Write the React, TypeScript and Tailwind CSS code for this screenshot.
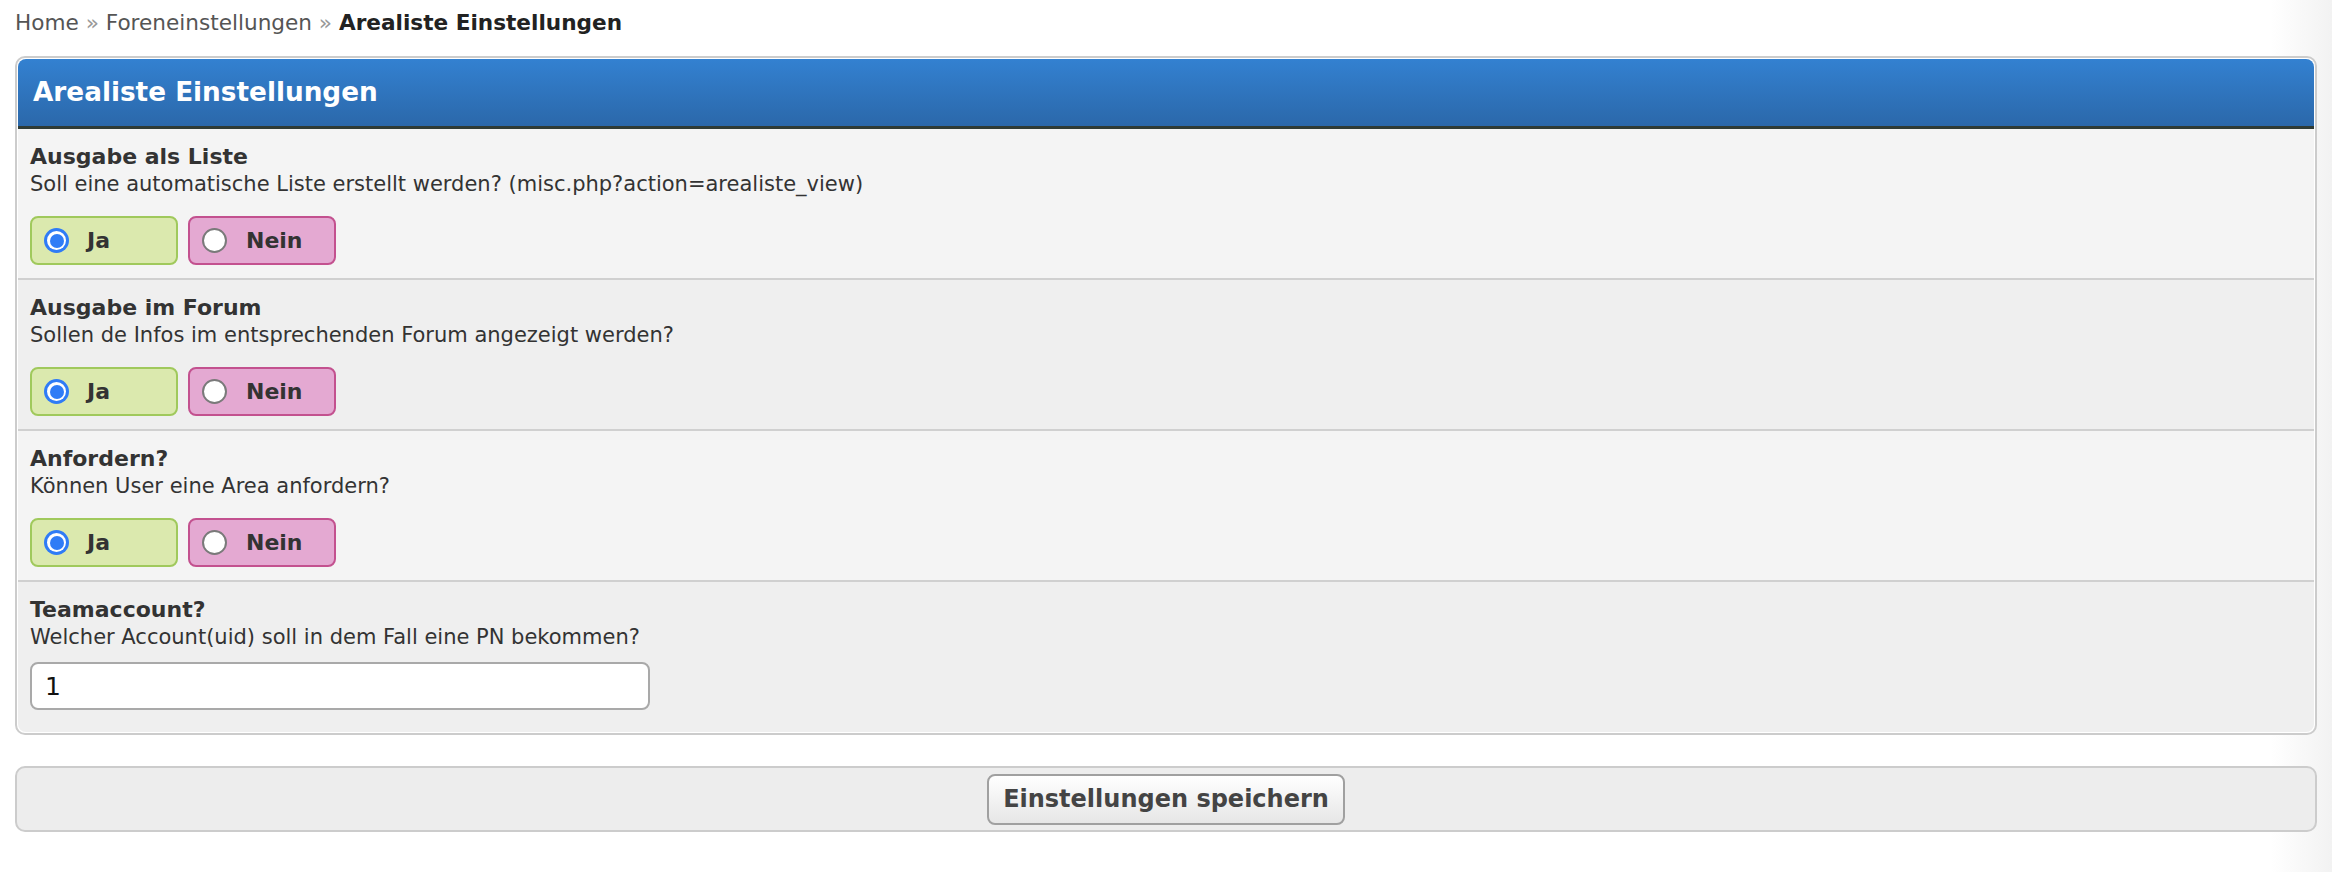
import React from 'react';

type Setting = {
  title: string;
  desc: string;
  kind: 'yesno' | 'text';
  value: string;
};

const settings: Setting[] = [
  {
    title: 'Ausgabe als Liste',
    desc: 'Soll eine automatische Liste erstellt werden? (misc.php?action=arealiste_view)',
    kind: 'yesno',
    value: 'ja',
  },
  {
    title: 'Ausgabe im Forum',
    desc: 'Sollen de Infos im entsprechenden Forum angezeigt werden?',
    kind: 'yesno',
    value: 'ja',
  },
  {
    title: 'Anfordern?',
    desc: 'Können User eine Area anfordern?',
    kind: 'yesno',
    value: 'ja',
  },
  {
    title: 'Teamaccount?',
    desc: 'Welcher Account(uid) soll in dem Fall eine PN bekommen?',
    kind: 'text',
    value: '1',
  },
];

// Radio-Kreis wie im macOS-Look
function RadioDot({ checked }: { checked: boolean }) {
  if (checked) {
    return (
      <span className="flex h-[25px] w-[25px] items-center justify-center rounded-full bg-[#2f7cf6]">
        <span className="flex h-[19px] w-[19px] items-center justify-center rounded-full bg-white">
          <span className="h-[14px] w-[14px] rounded-full bg-[#2f7cf6]" />
        </span>
      </span>
    );
  }
  return <span className="h-[25px] w-[25px] rounded-full border-2 border-[#7a7a7a] bg-white" />;
}

function YesNo({ value }: { value: string }) {
  return (
    <div className="mt-[18px] flex gap-[10px]">
      <label className="flex h-[49px] w-[148px] items-center rounded-[8px] border-2 border-[#a0c95c] bg-[#dbe9ae] pl-[12px]">
        <RadioDot checked={value === 'ja'} />
        <span className="ml-[18px] text-[22px] font-bold text-[#333]">Ja</span>
      </label>
      <label className="flex h-[49px] w-[148px] items-center rounded-[8px] border-2 border-[#c3518f] bg-[#e4a9d2] pl-[12px]">
        <RadioDot checked={value === 'nein'} />
        <span className="ml-[19px] text-[22px] font-bold text-[#333]">Nein</span>
      </label>
    </div>
  );
}

export default function App() {
  return (
    <div
      className="min-h-screen w-full bg-[linear-gradient(90deg,#ffffff_97.4%,#f2f2f2_100%)] px-[15px] text-[#333]"
      style={{ fontFamily: '"DejaVu Sans", Verdana, sans-serif' }}
    >
      {/* Breadcrumb */}
      <div className="pt-[10px] text-[21.6px] leading-[26px]">
        <span className="text-[#555]">Home</span>
        <span className="text-[#999]"> » </span>
        <span className="text-[#555]">Foreneinstellungen</span>
        <span className="text-[#999]"> » </span>
        <span className="font-bold text-[#222]">Arealiste Einstellungen</span>
      </div>

      {/* Panel */}
      <div className="mt-[20px] rounded-[10px] border-2 border-[#cccccc] bg-white p-px">
        <div className="flex h-[70px] items-center rounded-t-[8px] border-b-[3px] border-[#2f3b35] bg-gradient-to-b from-[#3381d1] to-[#2b68aa] px-[15px]">
          <h2 className="text-[26.3px] font-bold text-white">Arealiste Einstellungen</h2>
        </div>

        {settings.map((s, i) => {
          const last = i === settings.length - 1;
          return (
            <div
              key={s.title}
              className={
                (i % 2 === 0 ? 'bg-[#f4f4f4] ' : 'bg-[#efefef] ') +
                (last ? 'rounded-b-[8px] px-[12px] pt-[14px] pb-[22px]' : 'border-b-2 border-[#d0d0d0] px-[12px] pt-[14px] pb-[13px]')
              }
            >
              <div className="text-[22px] font-bold leading-[27px] text-[#333]">{s.title}</div>
              <div className="text-[21px] leading-[28px] text-[#333]">{s.desc}</div>
              {s.kind === 'yesno' ? (
                <YesNo value={s.value} />
              ) : (
                <input
                  type="text"
                  defaultValue={s.value}
                  className="mt-[11px] block h-[48px] w-[620px] rounded-[8px] border-2 border-[#a9a9a9] bg-white px-[13px] text-[25px] text-[#111] outline-none"
                  style={{ fontFamily: '"DejaVu Sans", sans-serif' }}
                />
              )}
            </div>
          );
        })}
      </div>

      {/* Speichern */}
      <div className="mt-[31px] flex h-[66px] items-center justify-center rounded-[10px] border-2 border-[#cccccc] bg-[#ededed]">
        <button className="h-[51px] rounded-[8px] border-2 border-[#a0a0a0] bg-gradient-to-b from-[#ffffff] to-[#e6e6e6] px-[14px] text-[24px] font-bold leading-none text-[#444]">
          Einstellungen speichern
        </button>
      </div>
    </div>
  );
}
